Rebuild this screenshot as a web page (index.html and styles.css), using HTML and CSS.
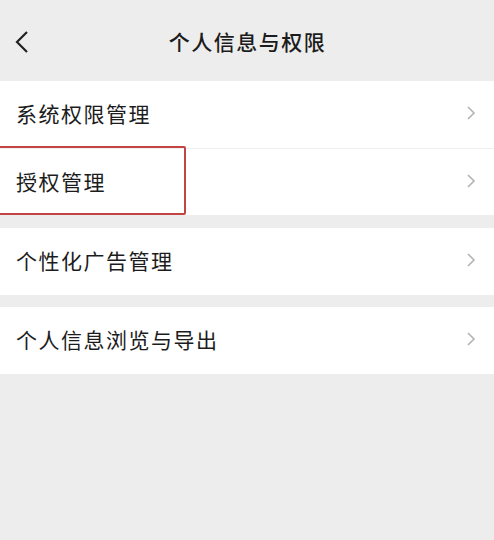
FILE: index.html
```html
<!DOCTYPE html>
<html lang="zh">

<head>
    <title>个人信息与权限</title>
    <meta charset="utf-8">
    <meta name="viewport" content="width=device-width, initial-scale=1">
    <link rel="stylesheet" href="styles.css">
</head>

<body>
    <div class="header">
        <span class="back">
            <svg width="14" height="24" viewBox="0 0 14 24">
                <path d="M12 2 L2 12 L12 22" fill="none" stroke="#222" stroke-width="2.2" stroke-linejoin="miter" />
            </svg>
        </span>
        <h1>个人信息与权限</h1>
    </div>

    <div class="group">
        <div class="row">
            <span>系统权限管理</span>
            <svg class="arrow" width="10" height="16" viewBox="0 0 10 16">
                <path d="M2 2 L8 8 L2 14" fill="none" stroke="#b3b3b3" stroke-width="1.6" />
            </svg>
        </div>
        <div class="row">
            <span>授权管理</span>
            <svg class="arrow" width="10" height="16" viewBox="0 0 10 16">
                <path d="M2 2 L8 8 L2 14" fill="none" stroke="#b3b3b3" stroke-width="1.6" />
            </svg>
            <div class="highlight"></div>
        </div>
    </div>

    <div class="group">
        <div class="row">
            <span>个性化广告管理</span>
            <svg class="arrow" width="10" height="16" viewBox="0 0 10 16">
                <path d="M2 2 L8 8 L2 14" fill="none" stroke="#b3b3b3" stroke-width="1.6" />
            </svg>
        </div>
    </div>

    <div class="group">
        <div class="row">
            <span>个人信息浏览与导出</span>
            <svg class="arrow" width="10" height="16" viewBox="0 0 10 16">
                <path d="M2 2 L8 8 L2 14" fill="none" stroke="#b3b3b3" stroke-width="1.6" />
            </svg>
        </div>
    </div>
</body>

</html>
```

FILE: styles.css
```css
* {
    margin: 0;
    padding: 0;
    box-sizing: border-box;
}

body {
    background-color: #ededed;
    color: #1c1c1c;
    font-family: "Noto Sans CJK SC", "Noto Sans", sans-serif;
    height: 100vh;
}

.header {
    height: 81px;
    display: flex;
    align-items: center;
    justify-content: center;
    position: relative;
}

.header h1 {
    font-size: 21px;
    font-weight: 500;
    letter-spacing: 1.5px;
    margin-left: 1px;
}

.back {
    position: absolute;
    left: 15px;
    top: 30px;
}

.group {
    background-color: #fff;
    margin-bottom: 13px;
}

.group:nth-child(3) {
    margin-bottom: 12px;
}

.row {
    position: relative;
    height: 67px;
    display: flex;
    align-items: center;
    justify-content: space-between;
    padding: 0 18px 3px 16px;
    font-size: 21px;
    letter-spacing: 1.5px;
}

.row + .row {
    border-top: 1px solid #f0f0f0;
}

.highlight {
    position: absolute;
    left: -2px;
    top: -3px;
    width: 188px;
    height: 69px;
    border: 2px solid #c24543;
    border-radius: 2px;
}
```
